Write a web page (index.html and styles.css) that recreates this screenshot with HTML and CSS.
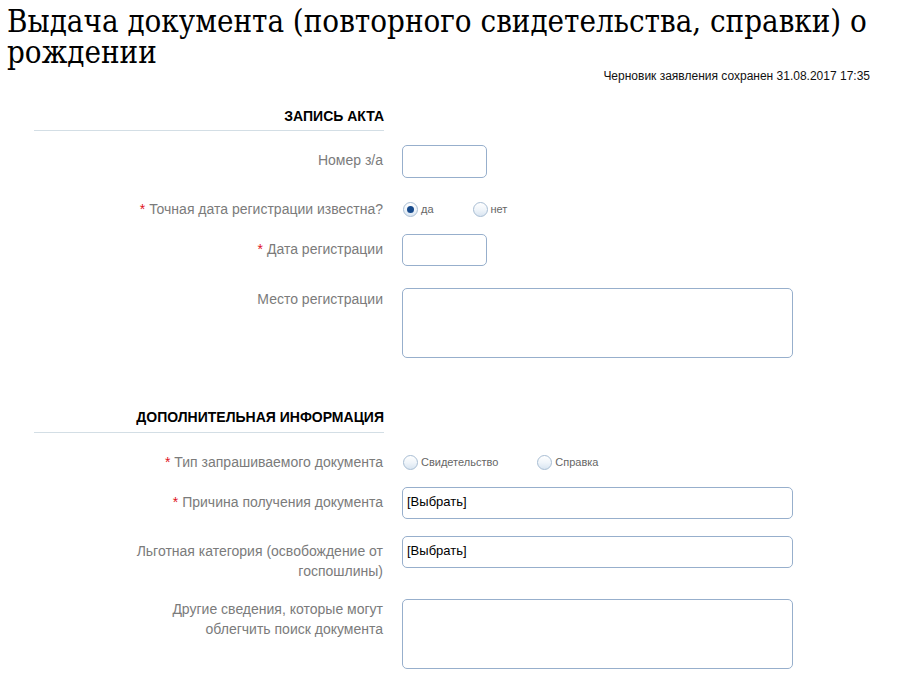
FILE: index.html
```html
<!DOCTYPE html>
<html lang="ru">
<head>
<meta charset="utf-8">
<title>Выдача документа</title>
<link rel="stylesheet" href="styles.css">
</head>
<body>
<h1 class="title">Выдача документа (повторного свидетельства, справки) о рождении</h1>
<div class="draft">Черновик заявления сохранен 31.08.2017 17:35</div>

<div class="form">
  <div class="section-head s1">ЗАПИСЬ АКТА</div>

  <div class="row">
    <div class="label lp"><span class="ltext">Номер з/а</span></div>
    <div class="field"><div class="input small"></div></div>
  </div>

  <div class="row radio-row r-radio1">
    <div class="label"><span class="ltext"><span class="req">*</span> Точная дата регистрации известна?</span></div>
    <div class="field radios">
      <span class="opt"><span class="radio checked"></span><span class="opt-text">да</span></span>
      <span class="opt"><span class="radio"></span><span class="opt-text">нет</span></span>
    </div>
  </div>

  <div class="row r-date">
    <div class="label lp"><span class="ltext"><span class="req">*</span> Дата регистрации</span></div>
    <div class="field"><div class="input small short"></div></div>
  </div>

  <div class="row r-place">
    <div class="label lp1"><span class="ltext">Место регистрации</span></div>
    <div class="field"><div class="textarea"></div></div>
  </div>

  <div class="section-head s2">ДОПОЛНИТЕЛЬНАЯ ИНФОРМАЦИЯ</div>

  <div class="row radio-row r-radio2">
    <div class="label"><span class="ltext"><span class="req">*</span> Тип запрашиваемого документа</span></div>
    <div class="field radios">
      <span class="opt"><span class="radio"></span><span class="opt-text">Свидетельство</span></span>
      <span class="opt"><span class="radio"></span><span class="opt-text">Справка</span></span>
    </div>
  </div>

  <div class="row r-reason">
    <div class="label lp"><span class="ltext"><span class="req">*</span> Причина получения документа</span></div>
    <div class="field"><div class="select">[Выбрать]</div></div>
  </div>

  <div class="row r-benefit">
    <div class="label lp"><span class="ltext">Льготная категория (освобождение от госпошлины)</span></div>
    <div class="field"><div class="select">[Выбрать]</div></div>
  </div>

  <div class="row r-other">
    <div class="label"><span class="ltext">Другие сведения, которые могут облегчить поиск документа</span></div>
    <div class="field"><div class="textarea"></div></div>
  </div>
</div>
</body>
</html>
```
FILE: styles.css
```css
html, body {
  margin: 0;
  padding: 0;
  background: #fff;
}

body {
  font-family: "Liberation Sans", Arial, sans-serif;
  color: #000;
}

h1.title {
  margin: 0;
  padding: 6px 8px 0 7px;
  font-family: "DejaVu Serif Condensed", "DejaVu Serif", serif;
  font-stretch: condensed;
  font-weight: normal;
  font-size: 31px;
  line-height: 31px;
  color: #000;
}

.draft {
  text-align: right;
  padding-right: 29px;
  font-size: 12px;
  line-height: 14px;
  margin-top: 1px;
  color: #111;
}

.form {
  padding-left: 34px;
}

.section-head {
  width: 350px;
  text-align: right;
  font-weight: bold;
  font-size: 14px;
  line-height: 20px;
  padding-bottom: 4px;
  border-bottom: 1px solid #d3dee5;
  color: #000;
}

.s1 {
  margin-top: 23px;
  margin-bottom: 14px;
}

.s2 {
  margin-top: 49px;
  padding-bottom: 5px;
  margin-bottom: 20px;
}

.row {
  display: grid;
  grid-template-columns: 350px 391px;
  column-gap: 18px;
  align-items: start;
}

.label {
  display: flex;
  justify-content: flex-end;
  text-align: right;
  font-size: 14px;
  line-height: 20px;
  color: #7b7b7b;
  padding-right: 1px;
}

.ltext {
  display: block;
  max-width: 252px;
}

.lp { padding-top: 5px; }
.lp1 { padding-top: 1px; }

.req {
  color: #e0141e;
}

.radio-row .label {
  line-height: 18px;
}

.r-radio1 { margin-top: 22px; }
.r-date { margin-top: 16px; }
.r-place { margin-top: 22px; }
.r-reason { margin-top: 16px; }
.r-benefit { margin-top: 17px; }
.r-other { margin-top: 18px; }

.input, .textarea, .select {
  box-sizing: border-box;
  border: 1px solid #97afcc;
  border-radius: 5px;
  background: #fff;
}

.input.small {
  width: 85px;
  height: 33px;
}

.input.short {
  height: 32px;
}

.textarea {
  width: 391px;
  height: 70px;
}

.select {
  width: 391px;
  height: 32px;
  padding: 5px 0 0 4px;
  font-size: 13px;
  line-height: 18px;
  color: #000;
}

.radios {
  display: flex;
  align-items: center;
  height: 18px;
}

.opt {
  display: inline-flex;
  align-items: center;
  margin-right: 38px;
}

.radio {
  box-sizing: border-box;
  width: 15px;
  height: 15px;
  border-radius: 50%;
  border: 1px solid #a8bdd3;
  background: linear-gradient(to bottom, #ffffff 0%, #f0f5fa 50%, #d9e5f1 100%);
  margin-left: 1px;
  position: relative;
  flex: none;
}

.radio.checked::after {
  content: "";
  position: absolute;
  left: 3px;
  top: 3px;
  width: 7px;
  height: 7px;
  border-radius: 50%;
  background: #174a8c;
}

.opt-text {
  font-size: 11px;
  color: #666;
  margin-left: 3px;
  line-height: 18px;
}
```
